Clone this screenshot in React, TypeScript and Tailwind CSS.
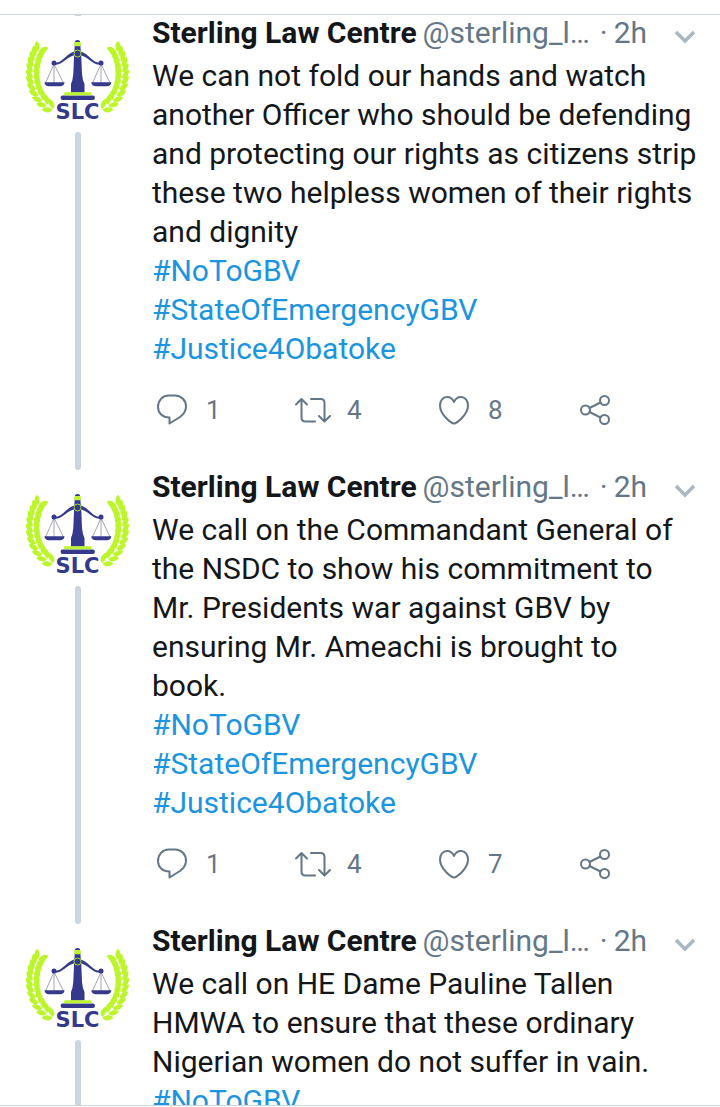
import React from 'react'

interface Tweet {
  id: number
  lines: string[]
  hashtags: string[]
  counts?: { replies: number, retweets: number, likes: number }
}

const tweets: Tweet[] = [
  {
    id: 1,
    lines: [
      'We can not fold our hands and watch',
      'another Officer who should be defending',
      'and protecting our rights as citizens strip',
      'these two helpless women of their rights',
      'and dignity'
    ],
    hashtags: ['#NoToGBV', '#StateOfEmergencyGBV', '#Justice4Obatoke'],
    counts: { replies: 1, retweets: 4, likes: 8 }
  },
  {
    id: 2,
    lines: [
      'We call on the Commandant General of',
      'the NSDC to show his commitment to',
      'Mr. Presidents war against GBV by',
      'ensuring Mr. Ameachi is brought to',
      'book.'
    ],
    hashtags: ['#NoToGBV', '#StateOfEmergencyGBV', '#Justice4Obatoke'],
    counts: { replies: 1, retweets: 4, likes: 7 }
  },
  {
    id: 3,
    lines: [
      'We call on HE Dame Pauline Tallen',
      'HMWA to ensure that these ordinary',
      'Nigerian women do not suffer in vain.'
    ],
    hashtags: ['#NoToGBV']
  }
]

// Points along the laurel stem, from the tip down to the base
const stem = Array.from({ length: 12 }, (_, i) => {
  const t = i / 11
  const u = 1 - t
  const x = u * u * u * 13 + 3 * u * u * t * 4 + 3 * u * t * t * 3 + t * t * t * 25
  const y = u * u * u * 28 + 3 * u * u * t * 43 + 3 * u * t * t * 71 + t * t * t * 86
  const dx = 3 * (u * u * -9 + 2 * u * t * -1 + t * t * 22)
  const dy = 3 * (u * u * 15 + 2 * u * t * 28 + t * t * 15)
  return { x, y, angle: (Math.atan2(-dy, -dx) * 180) / Math.PI }
})

const Laurel: React.FC = () => (
  <g fill="#bdf52c">
    {stem.map((p, i) => (
      <g key={i} transform={`translate(${p.x} ${p.y}) rotate(${p.angle})`}>
        <path d="M-2 .3C-3 4.500 1 7.200 6.500 6.800C7 3.500 4 .3-2 .3Z" />
        <path d="M-2-.3C-3-4.500 1-7.200 6.500-6.800C7-3.500 4-.3-2-.3Z" />
      </g>
    ))}
  </g>
)

const Logo: React.FC = () => (
  <svg viewBox="0 0 104 104" className="size-[104px] shrink-0" role="img" aria-label="Sterling Law Centre">
    <Laurel />
    <g transform="translate(103 0) scale(-1 1)">
      <Laurel />
    </g>
    {/* Strings */}
    <path
      d="M28 42 19.500 61M28 42V61M28 42 37.500 61M75 42 66.500 61M75 42V61M75 42 84 61"
      fill="none"
      stroke="#8d8d9c"
      strokeWidth=".8"
    />
    <g fill="#34398c">
      <path d="M18.500 60.300H38.500C38.500 63 36 64.300 34 64.300H23C21 64.300 18.500 63 18.500 60.300Z" />
      <path d="M65.300 60.300H85.300C85.300 63 83 64.300 81 64.300H70C67.500 64.300 65.300 63 65.300 60.300Z" />
      <circle cx="28" cy="41" r="2.500" />
      <circle cx="75" cy="41" r="2.500" />
      <path d="M28 40.500C36 42 38 33.500 48 29.500L50 33C40 34 37 44 28 42.500Z" />
      <path d="M75 40.500C67 42 65 33.500 55 29.500L53 33C63 34 66 44 75 42.500Z" />
      <path d="M49 19.500Q49 18 51.500 18T54 19.500L55.300 35 56 52Q56.500 58 58.500 62V70.500H45V62Q46.800 58 47.300 52L48 35Z" />
      <rect x="34.600" y="73.500" width="34.300" height="4.500" rx="2" />
    </g>
    <rect x="38" y="70.300" width="27.500" height="3" rx="1" fill="#bdf52c" />
    <rect x="48.300" y="20" width="6.400" height="4.200" rx="1" fill="#bdf52c" />
    <circle cx="51.500" cy="31.500" r="3.500" fill="#34398c" stroke="#a5dc3c" strokeWidth="1" />
    <text
      x="51.500"
      y="97"
      textAnchor="middle"
      fontSize="21"
      fontWeight="700"
      fill="#34398c"
      className="font-['DejaVu_Sans',sans-serif]"
    >
      SLC
    </text>
  </svg>
)

const iconProps = {
  viewBox: '0 0 40 40',
  className: 'size-10 shrink-0',
  fill: 'none',
  stroke: 'currentColor',
  strokeWidth: 2,
  strokeLinecap: 'round' as const,
  strokeLinejoin: 'round' as const
}

const ReplyIcon = () => (
  <svg {...iconProps}>
    <path d="M16.500 5.500H23C29.500 5.500 34 10.500 34 16.500C34 21 32 24 28 27L17.500 33.500V27.500C10.500 27.500 6 23 6 17C6 10.500 10.500 5.500 16.500 5.500Z" />
  </svg>
)

const RetweetIcon = () => (
  <svg {...iconProps}>
    <path d="M3 14.500 8.500 9 14 14.500M8.500 9.500V27.500Q8.500 31.500 12.500 31.500H22" />
    <path d="M18 9H27.500Q31.500 9 31.500 13V31M26 26 31.500 31.500 37 26" />
  </svg>
)

const HeartIcon = () => (
  <svg {...iconProps}>
    <path d="M20 33.500C17.500 33.500 6 25 6 15.500C6 10.500 9 7 13 7C16.500 7 18.800 9 20 12C21.200 9 23.500 7 27 7C31 7 34 10.500 34 15.500C34 25 22.500 33.500 20 33.500Z" />
  </svg>
)

const ShareIcon = () => (
  <svg {...iconProps}>
    <circle cx="10.500" cy="20" r="4.500" />
    <circle cx="29.500" cy="10.500" r="4.500" />
    <circle cx="29.500" cy="29.500" r="4.500" />
    <path d="M14.500 18 25.500 12.500M14.500 22 25.500 27.500" />
  </svg>
)

const Action: React.FC<{ label: string, count?: number, children: React.ReactNode }> = ({ label, count, children }) => (
  <button type="button" aria-label={label} className="flex items-center gap-3.5 text-[26px] leading-10">
    {children}
    {count !== undefined && <span>{count}</span>}
  </button>
)

const TweetItem: React.FC<{ tweet: Tweet }> = ({ tweet }) => (
  <article className="flex">
    {/* Avatar and thread line */}
    <div className="ml-[26px] flex w-[104px] shrink-0 flex-col items-center gap-1.5 pt-1.5">
      <Logo />
      <div className="w-1.5 flex-1 rounded-full bg-[#cbd5dd]" />
    </div>

    <div className="ml-[22px] min-w-0 flex-1">
      <header className="mb-1.5 flex h-[34px] items-center pr-6 text-[30px] leading-[34px] whitespace-nowrap text-[#657786]">
        <span className="font-bold text-[#14171a]">Sterling Law Centre</span>
        <span className="ml-1.5">@sterling_l…</span>
        <span className="ml-2.5">·</span>
        <span className="ml-1.5">2h</span>
        <button type="button" aria-label="More" className="mt-2 ml-auto text-[#aab8c2]">
          <svg viewBox="0 0 22 14" className="h-3.5 w-[22px]" fill="none" stroke="currentColor" strokeWidth="3.500">
            <path d="M2 2 11 11 20 2" />
          </svg>
        </button>
      </header>
      <p className="text-[30px] leading-[39px] whitespace-nowrap text-[#14171a]">
        {tweet.lines.map((line) => (
          <span key={line} className="block">{line}</span>
        ))}
        {tweet.hashtags.map((tag) => (
          <a key={tag} href="#" className="block text-[#1b95e0]">{tag}</a>
        ))}
      </p>
      {tweet.counts && (
        <div className="grid grid-cols-4 pt-[22px] pr-1 pb-10 text-[#657786]">
          <Action label="Reply" count={tweet.counts.replies}><ReplyIcon /></Action>
          <Action label="Retweet" count={tweet.counts.retweets}><RetweetIcon /></Action>
          <Action label="Like" count={tweet.counts.likes}><HeartIcon /></Action>
          <Action label="Share"><ShareIcon /></Action>
        </div>
      )}
    </div>
  </article>
)

const App: React.FC = () => {
  return (
    <div className="h-screen bg-white pt-3.5 pb-px font-[Roboto,sans-serif]">
      <main className="h-full overflow-hidden border-y border-[#ccd6dd]">
        {/* End of the thread line that comes from above */}
        <div className="ml-[75px] h-px w-1.5 bg-[#cbd5dd]" />
        {tweets.map((tweet) => (
          <TweetItem key={tweet.id} tweet={tweet} />
        ))}
      </main>
    </div>
  )
}

export default App
